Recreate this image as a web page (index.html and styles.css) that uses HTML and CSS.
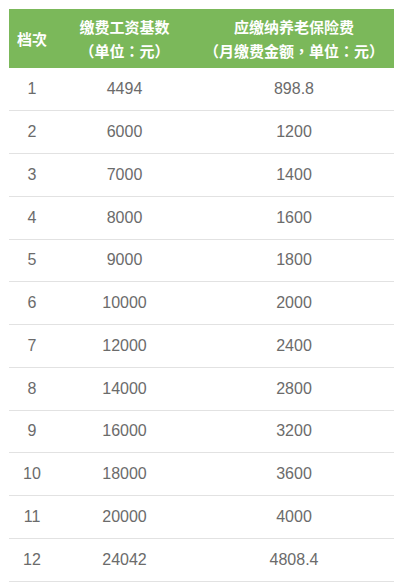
FILE: index.html
```html
<!DOCTYPE html>
<html lang="zh-CN">
<head>
<meta charset="utf-8">
<title>养老保险缴费档次</title>
<link rel="stylesheet" href="styles.css">
</head>
<body>
<table class="pension">
  <colgroup>
    <col class="c1"><col class="c2"><col class="c3">
  </colgroup>
  <thead lang="zh-Hant">
    <tr>
      <th>档次</th>
      <th>缴费工资基数<br>（单位：元）</th>
      <th>应缴纳养老保险费<br>（月缴费金额，单位：元）</th>
    </tr>
  </thead>
  <tbody>
    <tr><td>1</td><td>4494</td><td>898.8</td></tr>
    <tr><td>2</td><td>6000</td><td>1200</td></tr>
    <tr><td>3</td><td>7000</td><td>1400</td></tr>
    <tr><td>4</td><td>8000</td><td>1600</td></tr>
    <tr><td>5</td><td>9000</td><td>1800</td></tr>
    <tr><td>6</td><td>10000</td><td>2000</td></tr>
    <tr><td>7</td><td>12000</td><td>2400</td></tr>
    <tr><td>8</td><td>14000</td><td>2800</td></tr>
    <tr><td>9</td><td>16000</td><td>3200</td></tr>
    <tr><td>10</td><td>18000</td><td>3600</td></tr>
    <tr><td>11</td><td>20000</td><td>4000</td></tr>
    <tr><td>12</td><td>24042</td><td>4808.4</td></tr>
  </tbody>
</table>
</body>
</html>
```

FILE: styles.css
```css
html, body {
  margin: 0;
  padding: 0;
  background: #ffffff;
}
body {
  padding: 9px 0 0 9px;
}
.pension {
  border-collapse: collapse;
  border-spacing: 0;
  table-layout: fixed;
  width: 385px;
  font-family: "Liberation Sans", "Noto Sans CJK SC", sans-serif;
}
.c1 { width: 46px; }
.c2 { width: 139px; }
.c3 { width: 200px; }
.pension th {
  background: #7bb85a;
  color: #ffffff;
  font-family: "Noto Sans CJK TC", "Noto Sans CJK SC", sans-serif;
  font-weight: 700;
  font-size: 15px;
  line-height: 24px;
  height: 59px;
  padding: 0;
  text-align: center;
  vertical-align: middle;
  box-sizing: border-box;
}
.pension td {
  height: 42.75px;
  padding: 0;
  box-sizing: border-box;
  text-align: center;
  vertical-align: middle;
  color: #6b6b6b;
  font-size: 16px;
  border-bottom: 1px solid #e2e2e2;
}
```
